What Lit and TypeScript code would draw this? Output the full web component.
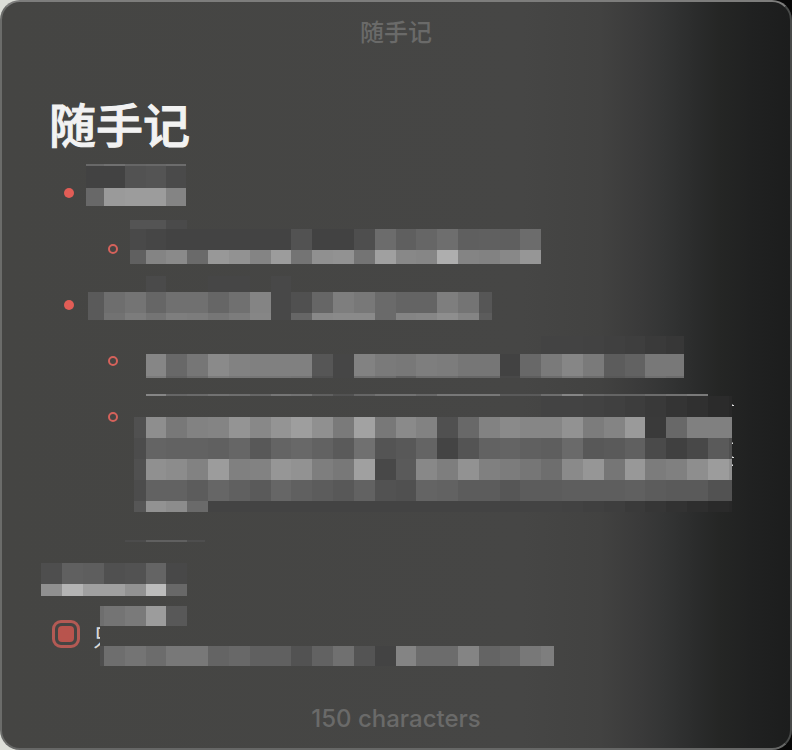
import { LitElement, html, svg, css } from "lit";
import { customElement, property } from "lit/decorators.js";

/** A band of mosaic cells: top, bottom, first column, one grey byte per column (".." is empty). */
type Band = [number, number, number, string];
interface Patch {
  x: number;
  y: number;
  right: number;
  bottom: number;
  bands: Band[];
  specks?: [number, number][];
}

const column = (n: number) => Math.round(41.4 + n * 20.83);

const patches: Record<string, Patch> = {
  first: {
    x: 86, y: 164, right: 186, bottom: 206,
    bands: [
      [164, 166, 2, "68 70 66 68 6c"],
      [166, 188, 2, "42 42 52 54 4a"],
      [188, 206, 2, "68 9a 9c 9c 84"],
    ],
  },
  second: {
    x: 130, y: 220, right: 542, bottom: 264,
    bands: [
      [220, 229, 4, "54 54 4a"],
      [229, 250, 4, "49 46 43 43 43 43 43 43 52 42 42 4e 6c 5f 66 6e 5f 60 5f 6c"],
      [250, 264, 4, "60 84 8a 6a 98 92 84 9c 74 90 92 74 a0 88 86 ae 84 82 88 96"],
    ],
  },
  third: {
    x: 88, y: 276, right: 492, bottom: 320,
    bands: [
      [276, 292, 5, "4a .. .. 46 46 .. 48"],
      [292, 313, 2, "5a 6e 74 66 70 70 66 70 84 48 50 66 7e 78 6a 64 64 7e 74 56"],
      [313, 320, 2, "5a 72 7c 74 7e 7c 76 7c 86 48 66 88 8a 8a 6a 84 86 8e 84 5c"],
    ],
  },
  fourth: {
    x: 130, y: 332, right: 684, bottom: 378,
    bands: [
      [336, 354, 24, "43 43 42 40 3e 3a 37"],
      [354, 376, 5, "86 68 76 8a 82 80 80 80 56 46 82 7a 78 7e 7c 76 76 42 68 7a 86 7a 5c 62 78 78"],
      [376, 378, 5, "7c 62 6c 7c 78 76 76 74 50 46 70 6c 60 6c 6c 66 66 48 5e 6c 76 6c 58 5c 70 6c"],
    ],
  },
  fifth: {
    x: 134, y: 388, right: 734, bottom: 512,
    bands: [
      [394, 396, 5, "86 66 6a 72 6e 66 76 72 60 52 66 72 72 68 78 78 78 5a 5a 6e 86 68 64 64 6c 72 7a"],
      [396, 417, 24, "43 43 42 40 3d 39 34 30 2b 28"],
      [417, 438, 4, "50 8e 78 82 84 94 88 94 9e 90 7a a2 78 8a 82 50 68 82 8a 86 86 92 7c 84 9a 3a 68 80 80 80"],
      [438, 459, 4, "4c 64 62 62 60 66 58 64 68 62 5a 70 54 58 64 44 54 62 64 60 5e 6a 58 5a 60 4a 40 48 5a 50"],
      [459, 480, 4, "50 90 8c 82 9c 80 82 96 92 7e 78 a0 48 5a 88 7e 92 80 7c 76 6e 8a 96 76 98 7c 80 8e 9c 90"],
      [480, 501, 4, "4c 62 62 5c 66 60 5a 66 60 5c 58 62 52 50 64 62 5c 5c 56 5c 5c 5e 5e 5e 60 5c 5a 5a 52 52"],
      [501, 512, 4, "56 92 8c 6a 43 43 43 43 43 43 43 43 43 43 43 43 43 43 43 43 43 42 40 3e 3a 36 32 2e 2a 28"],
    ],
    specks: [[732, 405], [732, 443], [732, 457], [732, 465]],
  },
  sixth: {
    x: 41, y: 540, right: 205, bottom: 596,
    bands: [
      [540, 542, 4, "4c 60 60 4e"],
      [563, 584, 0, "4e 60 5e 50 52 64 48"],
      [584, 596, 0, "90 b4 a0 a0 92 bc 68"],
    ],
  },
  task: {
    x: 100, y: 606, right: 554, bottom: 666,
    bands: [
      [606, 626, 2, "6e 74 7a 9c 58"],
      [646, 666, 2, "4e 6e 74 6c 78 78 64 68 60 60 52 62 70 54 43 84 6c 6c 84 64 68 78 7e"],
    ],
  },
};

@customElement("mosaic-patch")
export class MosaicPatch extends LitElement {
  @property() name = "first";

  static styles = css`
    :host { display: block; flex: none; }
    .patch { display: block; }
  `;

  render() {
    const p = patches[this.name];
    const cells = p.bands.flatMap(([top, bottom, start, greys]) =>
      greys.split(" ").map((g, i) => {
        if (g === "..") return null;
        const left = Math.max(column(start + i), p.x);
        const right = Math.min(column(start + i + 1), p.specks ? 732 : p.right);
        return svg`<rect x=${left - p.x} y=${top - p.y} width=${Math.max(0, right - left)}
          height=${bottom - top} fill=${`#${g}${g}${g}`}></rect>`;
      })
    );
    const specks = (p.specks ?? []).map(
      ([x, y], i) => svg`<rect x=${x - p.x} y=${y - p.y} width=${i % 2 ? 1 : 2} height="1" fill="#e4e4e4"></rect>
        <rect x=${x - p.x} y=${y - p.y - 1} width="1" height="1" fill="#888888"></rect>`
    );
    const w = p.right - p.x;
    const h = p.bottom - p.y;
    return html`<svg class="patch" width=${w} height=${h} viewBox="0 0 ${w} ${h}" shape-rendering="crispEdges" aria-hidden="true">
      ${cells}${specks}
    </svg>`;
  }
}

@customElement("app-root")
export class AppRoot extends LitElement {
  static styles = css`
    :host {
      display: block;
      font-family: Inter, "Noto Sans CJK SC", sans-serif;
      background: linear-gradient(90deg, #dcded8 50%, #080808 50%);
    }
    * { box-sizing: border-box; }
    .window {
      display: flex;
      flex-direction: column;
      min-height: 100vh;
      border: 2px solid;
      border-color: #7d7d7c #484a49 #666766 #6b6c6a;
      border-radius: 20px;
      color: #f2f2f2;
      background: linear-gradient(
        90deg,
        #454543 0%, #464645 66%, #424241 76%, #3a3a3a 81%, #343535 84%,
        #2b2c2c 88%, #252625 91%, #202121 95%, #1c1d1d 100%
      );
    }
    .bar {
      display: flex;
      align-items: center;
      justify-content: center;
      height: 62px;
      font-size: 24px;
      line-height: 32px;
      font-weight: 500;
      color: #6a6a69;
    }
    .footer { height: 60px; margin-top: auto; padding-top: 2px; }
    .note { padding: 30px 0 22px 39px; }
    .heading {
      margin: 0 0 6px;
      padding-left: 8px;
      font-size: 47px;
      line-height: 64px;
      font-weight: 500;
      -webkit-text-stroke: 1px currentColor;
    }
    .list { margin: 0; padding: 0; list-style: none; }
    .row { display: flex; align-items: flex-start; min-height: 56px; }
    .dot {
      flex: none;
      width: 10px;
      height: 10px;
      margin: 24px 12px 0 23px;
      border-radius: 50%;
      background: #e25d56;
    }
    .wide .dot { margin-right: 14px; }
    .ring {
      flex: none;
      width: 10px;
      height: 10px;
      margin: 24px 12px 0 67px;
      border: 2px solid #d5625b;
      border-radius: 50%;
    }
    .inset .ring { margin-right: 16px; }
    .paragraph { margin: 28px 0 10px; }
    .task { display: flex; align-items: flex-start; }
    .check {
      appearance: none;
      display: grid;
      flex: none;
      width: 28px;
      height: 28px;
      margin: 14px 13px 0 11px;
      padding: 3px;
      border: 3px solid #b35a54;
      border-radius: 9px;
    }
    .check::before {
      content: "";
      border-radius: 4px;
      background: #b8544d;
    }
    .label {
      width: 7px;
      overflow: hidden;
      white-space: nowrap;
      font-size: 24px;
      line-height: 32px;
      margin-top: 16px;
      color: #d8d8d8;
    }
  `;

  render() {
    return html`
      <main class="window">
        <header class="bar">随手记</header>
        <article class="note">
          <h1 class="heading">随手记</h1>
          <ul class="list">
            <li>
              <div class="row"><span class="dot"></span><mosaic-patch name="first"></mosaic-patch></div>
              <ul class="list">
                <li class="row"><span class="ring"></span><mosaic-patch name="second"></mosaic-patch></li>
              </ul>
            </li>
            <li>
              <div class="row wide"><span class="dot"></span><mosaic-patch name="third"></mosaic-patch></div>
              <ul class="list">
                <li class="row"><span class="ring"></span><mosaic-patch name="fourth"></mosaic-patch></li>
                <li class="row inset"><span class="ring"></span><mosaic-patch name="fifth"></mosaic-patch></li>
              </ul>
            </li>
          </ul>
          <div class="paragraph"><mosaic-patch name="sixth"></mosaic-patch></div>
          <div class="task">
            <input class="check" id="task" type="checkbox" checked />
            <label class="label" for="task">只</label>
            <mosaic-patch name="task"></mosaic-patch>
          </div>
        </article>
        <footer class="bar footer">150 characters</footer>
      </main>
    `;
  }
}
